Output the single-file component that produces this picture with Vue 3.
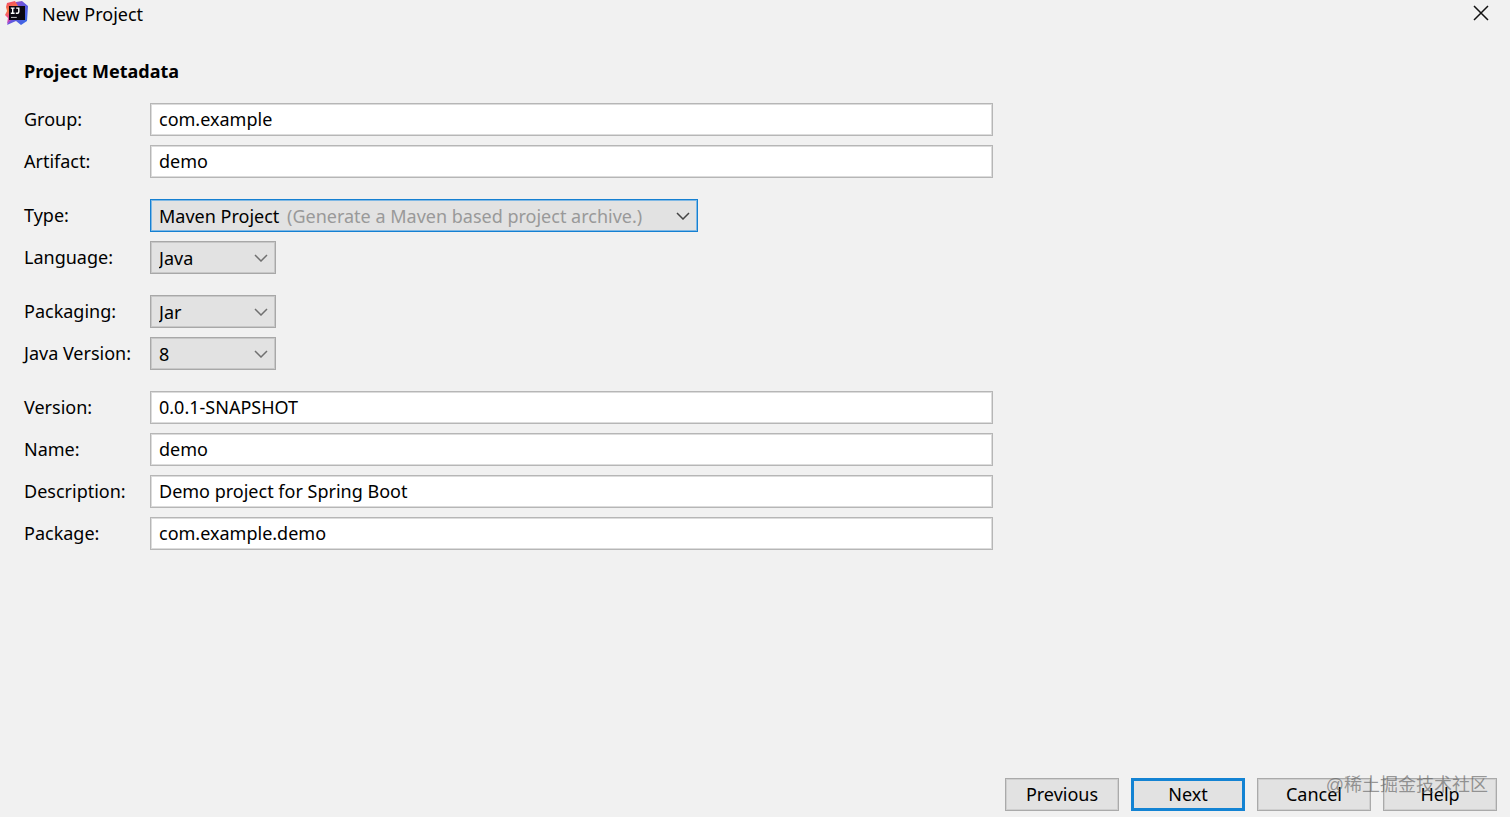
<script setup>
import { reactive } from 'vue'

const form = reactive({
  group: 'com.example',
  artifact: 'demo',
  type: 'Maven Project',
  language: 'Java',
  packaging: 'Jar',
  javaVersion: '8',
  version: '0.0.1-SNAPSHOT',
  name: 'demo',
  description: 'Demo project for Spring Boot',
  package: 'com.example.demo'
})

const sections = [
  [
    { key: 'group', label: 'Group:' },
    { key: 'artifact', label: 'Artifact:' }
  ],
  [
    { key: 'type', label: 'Type:', options: ['Maven Project'], hint: '(Generate a Maven based project archive.)' },
    { key: 'language', label: 'Language:', options: ['Java'] }
  ],
  [
    { key: 'packaging', label: 'Packaging:', options: ['Jar'] },
    { key: 'javaVersion', label: 'Java Version:', options: ['8'] }
  ],
  [
    { key: 'version', label: 'Version:' },
    { key: 'name', label: 'Name:' },
    { key: 'description', label: 'Description:' },
    { key: 'package', label: 'Package:' }
  ]
]
</script>

<template>
  <div class="dialog">
    <header class="titlebar">
      <svg class="logo" viewBox="0 0 24 24" aria-hidden="true">
        <defs>
          <linearGradient id="warm" x1="0" y1="0" x2="0.2" y2="1">
            <stop offset="0" stop-color="#ee3f74" />
            <stop offset="0.45" stop-color="#fb7a3c" />
            <stop offset="0.7" stop-color="#f0508a" />
            <stop offset="1" stop-color="#a63bd0" />
          </linearGradient>
          <linearGradient id="cool" x1="0" y1="0" x2="1" y2="0.8">
            <stop offset="0" stop-color="#c345a8" />
            <stop offset="0.5" stop-color="#6a55dc" />
            <stop offset="1" stop-color="#3868e6" />
          </linearGradient>
        </defs>
        <path d="M11 1 L17 0 L23 5 L22 20 L16 24 L11 20 L2 24 L6 16 Z" fill="url(#cool)" />
        <path d="M2 2 L10 0 L13 5 L7 18 L2 23 L3 17 L0 14 L2 10 L1 6 Z" fill="url(#warm)" />
        <rect x="4" y="5" width="16" height="14" fill="#0b0710" />
        <path d="M5.8 7.1 H9.6 M7.7 7.1 V12.2 M5.8 12.2 H9.6 M11.2 7.1 H13.8 V10.8 Q13.8 12.3 12.4 12.3 H10.8" fill="none" stroke="#fff" stroke-width="1.4" />
        <path d="M6 16.4 H11.8" stroke="#c9c9c9" stroke-width="1" />
      </svg>
      <span class="title">New Project</span>
      <button class="close" type="button" aria-label="Close">
        <svg viewBox="0 0 16 16" aria-hidden="true"><path d="M1 1 L15 15 M15 1 L1 15" /></svg>
      </button>
    </header>

    <main class="content">
      <h1>Project Metadata</h1>
      <form id="metadata" class="form" @submit.prevent>
        <div v-for="(rows, i) in sections" :key="i" class="section">
          <div v-for="row in rows" :key="row.key" class="row">
            <label :for="row.key">{{ row.label }}</label>
            <div v-if="row.options" class="combo" :class="{ active: row.hint }">
              <select :id="row.key" v-model="form[row.key]">
                <option v-for="o in row.options" :key="o">{{ o }}</option>
              </select>
              <span v-if="row.hint" class="hint">{{ row.hint }}</span>
              <svg class="chevron" viewBox="0 0 14 8" aria-hidden="true"><path d="M1 1 L7 7 L13 1" /></svg>
            </div>
            <input v-else :id="row.key" v-model="form[row.key]" type="text" spellcheck="false" />
          </div>
        </div>
      </form>
    </main>

    <footer class="actions">
      <button type="button">Previous</button>
      <button type="submit" form="metadata" class="primary">Next</button>
      <button type="button">Cancel</button>
      <button type="button">Help</button>
      <span class="watermark">@稀土掘金技术社区</span>
    </footer>
  </div>
</template>

<style>
body {
  margin: 0;
  background: #f1f1f1;
}
</style>

<style scoped>
.dialog {
  display: flex;
  flex-direction: column;
  min-height: 100vh;
  box-sizing: border-box;
  background: #f1f1f1;
  color: #000;
  font-family: "Noto Sans", "Noto Sans CJK SC", sans-serif;
  font-size: 18px;
  line-height: 24px;
}
.titlebar {
  display: flex;
  align-items: center;
  height: 26px;
  padding: 0 20px 0 5px;
}
.logo {
  width: 24px;
  height: 24px;
  margin-right: 13px;
}
.title {
  flex: 1;
  padding-top: 2px;
}
.close {
  display: flex;
  padding: 0;
  border: 0;
  background: none;
}
.close svg {
  width: 18px;
  height: 16px;
}
.close path {
  stroke: #111;
  stroke-width: 1.5;
}
.content {
  flex: 1;
  padding: 33px 24px 24px;
}
h1 {
  margin: 0 0 20px;
  font-size: 18px;
  line-height: 24px;
  font-weight: 700;
}
.form {
  display: flex;
  flex-direction: column;
  gap: 21px;
  max-width: 969px;
}
.section {
  display: flex;
  flex-direction: column;
  gap: 9px;
}
.row {
  display: grid;
  grid-template-columns: 126px minmax(0, 1fr);
  align-items: center;
}
label {
  padding-bottom: 2px;
}
input,
select {
  box-sizing: border-box;
  width: 100%;
  height: 33px;
  margin: 0;
  padding: 0 8px;
  border: 1px solid #b6b6b6;
  border-radius: 0;
  outline: 0;
  background: #fff;
  box-shadow: inset 0 0 0 1px #dcdcdc;
  color: #000;
  font: inherit;
}
input {
  padding-bottom: 2px;
}
.combo {
  display: grid;
  grid-template-columns: minmax(0, 1fr);
  align-items: center;
  width: 126px;
}
.combo.active {
  width: 548px;
}
.combo > * {
  grid-area: 1 / 1;
}
select {
  appearance: none;
  border-color: #a8a8a8;
  background: #e2e2e2;
  box-shadow: inset 0 0 0 1px #c8c8c8;
}
.active select {
  border-color: #1580d2;
  box-shadow: inset 0 0 0 1px #7fb8e4;
}
.hint {
  margin-left: 137px;
  color: #999;
  white-space: nowrap;
  pointer-events: none;
}
.chevron {
  justify-self: end;
  width: 14px;
  height: 8px;
  margin-right: 8px;
  pointer-events: none;
}
.chevron path {
  fill: none;
  stroke: #707070;
  stroke-width: 1.5;
}
.active .chevron path {
  stroke: #444;
}
.actions {
  position: relative;
  display: flex;
  justify-content: flex-end;
  gap: 12px;
  padding: 0 13px 6px;
}
.actions button {
  width: 114px;
  height: 33px;
  padding: 0 0 2px;
  border: 1px solid #aaa;
  border-radius: 0;
  background: #e2e2e2;
  box-shadow: inset 0 0 0 1px #cfcfcf;
  color: #000;
  font: inherit;
}
.actions .primary {
  border: 3px solid #1383d3;
  box-shadow: none;
}
.watermark {
  position: absolute;
  right: 22px;
  top: -5px;
  color: rgba(90, 90, 90, 0.6);
  font-family: "Liberation Sans", "Noto Sans CJK SC", sans-serif;
  font-size: 18px;
  pointer-events: none;
}
</style>
